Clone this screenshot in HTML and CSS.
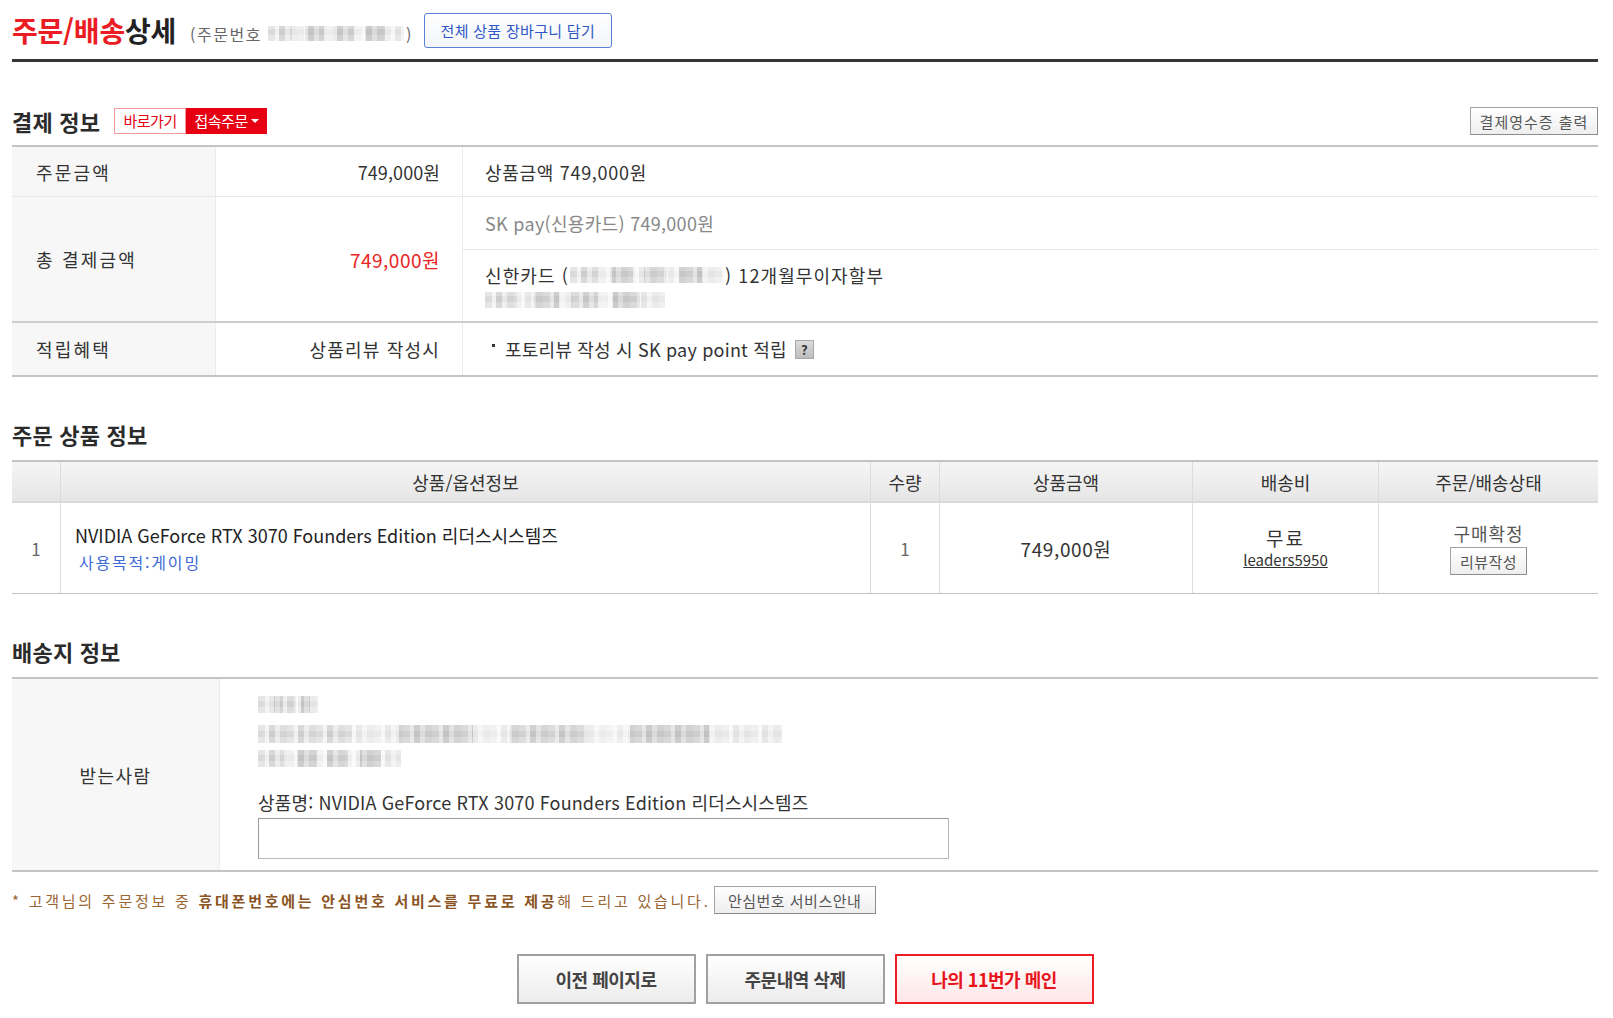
FILE: index.html
```html
<!DOCTYPE html>
<html lang="ko">
<head>
<meta charset="utf-8">
<title>주문/배송상세</title>
<link rel="stylesheet" href="styles.css">
</head>
<body>
<div class="page">
  <header class="page-head">
    <h1 class="page-title"><span class="red">주문/배송</span>상세</h1>
    <span class="order-no">(주문번호 <span class="blur blur-order"></span>)</span>
    <button class="btn btn-cart">전체 상품 장바구니 담기</button>
  </header>

  <section class="sec">
    <div class="sec-head">
      <h2 class="sec-title">결제 정보</h2>
      <div class="badge"><span class="badge-go">바로가기</span><span class="badge-order">접속주문<span class="caret"></span></span></div>
      <button class="btn btn-gray btn-receipt">결제영수증 출력</button>
    </div>
    <div class="pay-table">
      <div class="pay-row r1">
        <div class="pay-label">주문금액</div>
        <div class="pay-value num-val">749,000원</div>
        <div class="pay-detail"><div class="sub sub-single">상품금액 749,000원</div></div>
      </div>
      <div class="pay-row r2">
        <div class="pay-label">총 결제금액</div>
        <div class="pay-value red">749,000원</div>
        <div class="pay-detail">
          <div class="sub sub-top muted">SK pay(신용카드) 749,000원</div>
          <div class="sub sub-card">
            <div class="card-line">신한카드 (<span class="blur blur-card"></span>) 12개월무이자할부</div>
            <div class="blur blur-date"></div>
          </div>
        </div>
      </div>
      <div class="pay-row r3">
        <div class="pay-label">적립혜택</div>
        <div class="pay-value">상품리뷰 작성시</div>
        <div class="pay-detail">
          <div class="sub sub-single point"><span class="dot"></span>포토리뷰 작성 시 SK pay point 적립 <span class="help">?</span></div>
        </div>
      </div>
    </div>
  </section>

  <section class="sec">
    <div class="sec-head">
      <h2 class="sec-title">주문 상품 정보</h2>
    </div>
    <div class="prod-table">
      <div class="prod-row prod-headrow">
        <div class="pc"></div>
        <div class="pc">상품/옵션정보</div>
        <div class="pc">수량</div>
        <div class="pc">상품금액</div>
        <div class="pc">배송비</div>
        <div class="pc">주문/배송상태</div>
      </div>
      <div class="prod-row prod-body">
        <div class="pc num">1</div>
        <div class="pc prod-info">
          <div class="prod-name">NVIDIA GeForce RTX 3070 Founders Edition 리더스시스템즈</div>
          <div class="prod-opt">사용목적:게이밍</div>
        </div>
        <div class="pc num">1</div>
        <div class="pc price">749,000원</div>
        <div class="pc ship">
          <div class="free">무료</div>
          <a class="seller" href="#">leaders5950</a>
        </div>
        <div class="pc status">
          <div class="status-text">구매확정</div>
          <button class="btn btn-gray btn-review">리뷰작성</button>
        </div>
      </div>
    </div>
  </section>

  <section class="sec">
    <div class="sec-head">
      <h2 class="sec-title">배송지 정보</h2>
    </div>
    <div class="addr-table">
      <div class="addr-label">받는사람</div>
      <div class="addr-body">
        <div class="blur blur-name"></div>
        <div class="blur blur-addr"></div>
        <div class="blur blur-phone"></div>
        <div class="addr-prod">상품명: NVIDIA GeForce RTX 3070 Founders Edition 리더스시스템즈</div>
        <div class="addr-input"></div>
      </div>
    </div>
  </section>

  <div class="notice">
    <p class="notice-text">* 고객님의 주문정보 중 <b>휴대폰번호에는 안심번호 서비스를 무료로 제공</b>해 드리고 있습니다.</p>
    <button class="btn btn-gray btn-safe">안심번호 서비스안내</button>
  </div>

  <div class="actions">
    <button class="btn-big">이전 페이지로</button>
    <button class="btn-big">주문내역 삭제</button>
    <button class="btn-big btn-big-red">나의 11번가 메인</button>
  </div>
</div>
</body>
</html>
```

FILE: styles.css
```css
* { box-sizing: border-box; }

body {
  margin: 0;
  background: #fff;
  color: #333;
  font-family: "Noto Sans CJK KR", "Noto Sans", sans-serif;
  font-size: 18px;
}

.page {
  width: 1586px;
  margin-left: 12px;
}

.red { color: #ec1c24; }
.muted { color: #888; }

.btn {
  font-family: inherit;
  cursor: pointer;
  padding: 0;
}

/* ---------- page header ---------- */
.page-head {
  display: flex;
  align-items: center;
  padding-top: 13px;
  padding-bottom: 11px;
  border-bottom: 3px solid #363636;
}

.page-title {
  margin: 0;
  font-size: 28px;
  font-weight: 700;
  letter-spacing: -0.2px;
  line-height: 35px;
  color: #222;
}

.order-no {
  display: flex;
  align-items: center;
  margin-left: 14px;
  margin-top: 6px;
  font-size: 16px;
  color: #666;
  letter-spacing: 1.5px;
}

.blur {
  display: inline-block;
  background:
    linear-gradient(90deg, rgba(255,255,255,0) 0 18%, rgba(255,255,255,.45) 18% 27%, rgba(0,0,0,.05) 27% 41%, rgba(255,255,255,.5) 41% 48%, rgba(0,0,0,.04) 48% 63%, rgba(255,255,255,.55) 63% 71%, rgba(0,0,0,.06) 71% 86%, rgba(255,255,255,.4) 86% 100%),
    repeating-linear-gradient(90deg, rgba(255,255,255,0) 0 7px, rgba(255,255,255,.6) 7px 11px, rgba(0,0,0,.06) 11px 17px, rgba(255,255,255,.35) 17px 22px, rgba(0,0,0,.03) 22px 29px),
    repeating-linear-gradient(0deg, #e6e6e6 0 6px, #dadada 6px 12px);
  filter: blur(0.7px);
}

.blur-order {
  width: 136px;
  height: 15px;
  margin: 0 2px 0 6px;
}

.btn-cart {
  margin-left: 11px;
  height: 35px;
  width: 188px;
  border: 1px solid #5a80d8;
  border-radius: 3px;
  background: linear-gradient(#ffffff, #f3f5fb);
  color: #2f58c4;
  font-size: 15px;
  letter-spacing: 0.3px;
}

/* ---------- sections ---------- */
.sec-head {
  display: flex;
  align-items: center;
  height: 28px;
  margin-top: 43px;
  margin-bottom: 12px;
}

.sec:first-of-type .sec-head {
  margin-top: 45px;
  margin-bottom: 10px;
}

.sec-title {
  margin: 0;
  font-size: 22px;
  font-weight: 700;
  color: #2b2b2b;
  letter-spacing: 0.2px;
  line-height: 28px;
}

.badge {
  display: flex;
  height: 26px;
  margin-left: 14px;
  font-size: 15px;
  line-height: 24px;
}

.badge-go {
  width: 72px;
  border: 1px solid #f19a9a;
  background: #fff;
  color: #e60012;
  text-align: center;
  letter-spacing: -0.5px;
}

.badge-order {
  display: flex;
  align-items: center;
  justify-content: center;
  width: 81px;
  background: #e60012;
  color: #fff;
  letter-spacing: -0.5px;
}

.caret {
  width: 0;
  height: 0;
  margin-left: 3px;
  border-left: 4px solid transparent;
  border-right: 4px solid transparent;
  border-top: 4px solid #fff;
}

.btn-gray {
  border: 1px solid #a4a4a4;
  border-right-color: #8c8c8c;
  border-bottom-color: #8c8c8c;
  background: linear-gradient(#ffffff, #eeeeee);
  color: #555;
  font-size: 15px;
}

.btn-receipt {
  margin-left: auto;
  width: 128px;
  height: 28px;
  letter-spacing: 1px;
}

/* ---------- payment table ---------- */
.pay-table {
  border-top: 2px solid #c4c4c4;
}

.pay-row {
  display: grid;
  grid-template-columns: 204px 247px 1fr;
}

.pay-row.r1 { height: 50px; border-bottom: 1px solid #e8e8e8; }
.pay-row.r2 { height: 126px; border-bottom: 2px solid #cdcdcd; }
.pay-row.r3 { height: 54px; border-bottom: 2px solid #c4c4c4; }

.pay-label {
  display: flex;
  align-items: center;
  padding-left: 24px;
  background: #f7f7f7;
  border-right: 1px solid #ececec;
  font-size: 18px;
  letter-spacing: 2.2px;
}

.pay-value {
  display: flex;
  align-items: center;
  justify-content: flex-end;
  padding-right: 22px;
  border-right: 1px solid #ececec;
  font-size: 18px;
  letter-spacing: 1.2px;
}

.pay-value.num-val { letter-spacing: 0.1px; }
.pay-value.red { color: #ea2424; font-size: 19px; letter-spacing: 0.5px; }

.pay-detail {
  display: flex;
  flex-direction: column;
}

.sub {
  display: flex;
  align-items: center;
  padding-left: 22px;
  font-size: 18px;
  letter-spacing: 0.7px;
}

.sub-single { flex: 1; }
.sub-top { height: 53px; border-bottom: 1px solid #e8e8e8; letter-spacing: 0.3px; }

.sub-card {
  flex: 1;
  flex-direction: column;
  align-items: flex-start;
  justify-content: center;
}

.card-line {
  display: flex;
  align-items: center;
  line-height: 24px;
  letter-spacing: 1.1px;
}

.blur-card {
  width: 154px;
  height: 16px;
  margin: 0 1px;
}

.blur-date {
  width: 180px;
  height: 16px;
  margin-top: 5px;
}

.point { padding-left: 29px; letter-spacing: 0.2px; }

.dot {
  width: 3px;
  height: 3px;
  background: #333;
  margin-right: 10px;
  margin-top: -8px;
}

.help {
  display: inline-flex;
  align-items: center;
  justify-content: center;
  width: 19px;
  height: 19px;
  margin-left: 8px;
  background: linear-gradient(#dcdcdc, #bdbdbd);
  border: 1px solid #a8a8a8;
  font-size: 13px;
  font-weight: 700;
  color: #333;
  line-height: 1;
  letter-spacing: 0;
}

/* ---------- product table ---------- */
.prod-table {
  border-top: 2px solid #c2c2c2;
  border-bottom: 1px solid #c2c2c2;
}

.prod-row {
  display: grid;
  grid-template-columns: 49px 810px 69px 253px 186px 1fr;
}

.prod-headrow {
  height: 41px;
  background: linear-gradient(#f5f5f5, #e6e6e6);
  border-bottom: 2px solid #dadada;
}

.prod-headrow .pc {
  display: flex;
  align-items: center;
  justify-content: center;
  border-right: 1px solid #dcdcdc;
  font-size: 18px;
  color: #333;
}

.pc:last-child { border-right: none !important; }

.prod-body { height: 90px; }

.prod-body .pc {
  display: flex;
  flex-direction: column;
  align-items: center;
  justify-content: center;
  border-right: 1px solid #dcdcdc;
}

.num { font-size: 17px; color: #666; }

.prod-body .prod-info {
  align-items: flex-start;
  padding-left: 14px;
}

.prod-name {
  font-size: 18px;
  line-height: 24px;
  color: #222;
  letter-spacing: 0;
}

.prod-opt {
  margin-top: 4px;
  padding-left: 4px;
  font-size: 16px;
  line-height: 22px;
  color: #3d6ad6;
  letter-spacing: 1.8px;
}

.price { font-size: 19px; color: #333; letter-spacing: 0.6px; }

.free { font-size: 19px; line-height: 24px; color: #333; letter-spacing: 2px; }

.seller {
  font-size: 15px;
  line-height: 20px;
  color: #333;
  text-decoration: underline;
}

.status-text {
  font-size: 18px;
  line-height: 24px;
  color: #555;
  letter-spacing: 1px;
}

.btn-review {
  margin-top: 2px;
  width: 77px;
  height: 28px;
  letter-spacing: 0.5px;
}

/* ---------- address table ---------- */
.addr-table {
  display: grid;
  grid-template-columns: 208px 1fr;
  border-top: 2px solid #c4c4c4;
  border-bottom: 2px solid #c4c4c4;
}

.addr-label {
  display: flex;
  align-items: center;
  justify-content: center;
  background: #f7f7f7;
  border-right: 1px solid #ececec;
  font-size: 18px;
  letter-spacing: 1.5px;
}

.addr-body {
  display: flex;
  flex-direction: column;
  align-items: flex-start;
  padding: 17px 0 11px 38px;
}

.blur-name { width: 60px; height: 17px; }
.blur-addr { width: 524px; height: 18px; margin-top: 12px; }
.blur-phone { width: 143px; height: 17px; margin-top: 7px; }

.addr-prod {
  margin-top: 24px;
  font-size: 18px;
  line-height: 22px;
  color: #333;
  letter-spacing: 0.15px;
}

.addr-input {
  width: 691px;
  height: 41px;
  margin-top: 5px;
  border: 1px solid #b8b8b8;
  border-top-color: #9a9a9a;
  border-left-color: #9a9a9a;
  background: #fff;
}

/* ---------- notice ---------- */
.notice {
  display: flex;
  align-items: center;
  height: 28px;
  margin-top: 14px;
}

.notice-text {
  margin: 0;
  font-size: 15px;
  color: #9a6533;
  letter-spacing: 2.75px;
}

.notice-text b {
  font-weight: 700;
  color: #8a5424;
}

.btn-safe {
  margin-left: 3px;
  width: 162px;
  height: 28px;
  letter-spacing: 0.5px;
}

/* ---------- bottom buttons ---------- */
.actions {
  display: flex;
  justify-content: center;
  gap: 10px;
  margin-top: 40px;
}

.btn-big {
  width: 179px;
  height: 50px;
  border: 2px solid #a0a0a0;
  background: linear-gradient(#ffffff, #ececec);
  font-family: inherit;
  font-size: 18px;
  font-weight: 700;
  color: #444;
  letter-spacing: -0.5px;
}

.btn-big-red {
  width: 199px;
  border-color: #ee1c24;
  background: linear-gradient(#ffffff, #ffe6e6);
  color: #e8141c;
}
```
